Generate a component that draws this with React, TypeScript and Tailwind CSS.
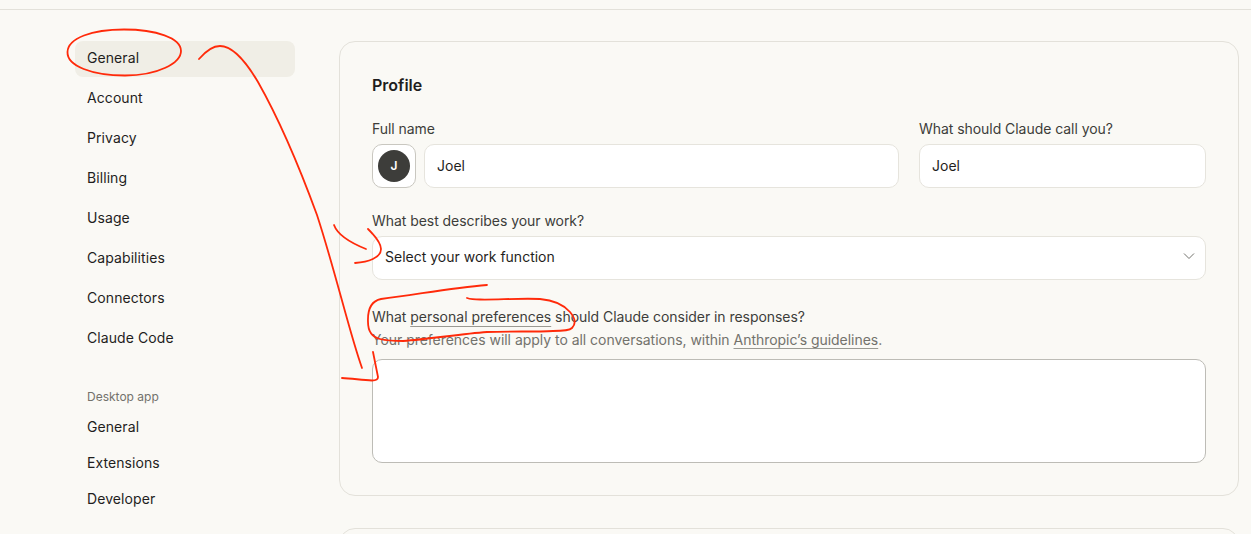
const FONT = "font-['Inter','Noto_Sans',sans-serif]";

const MAIN_NAV = ["General", "Account", "Privacy", "Billing", "Usage", "Capabilities", "Connectors", "Claude Code"];
const DESKTOP_NAV = ["General", "Extensions", "Developer"];

function NavItem({ label, active }: { label: string; active?: boolean }) {
  return (
    <div
      className={`flex h-9 items-center rounded-lg px-3 pb-0.5 text-[14px] leading-none tracking-[0.08px] text-[#1f1e1d] ${
        active ? "bg-[#f0eee6]" : ""
      }`}
    >
      {label}
    </div>
  );
}

function Sidebar() {
  return (
    <nav className="w-[220px] shrink-0">
      <div className="flex flex-col gap-1">
        {MAIN_NAV.map((item, i) => (
          <NavItem key={item} label={item} active={i === 0} />
        ))}
      </div>
      <div className="mt-[30px] mb-[3px] h-5 px-3 text-[12px] leading-5 text-[#73726c]">Desktop app</div>
      <div className="flex flex-col">
        {DESKTOP_NAV.map((item) => (
          <NavItem key={item} label={item} />
        ))}
      </div>
    </nav>
  );
}

function TextField({ value }: { value: string }) {
  return (
    <input
      readOnly
      defaultValue={value}
      className="h-11 w-full rounded-[10px] border border-[#e6e4dd] bg-white px-3 pb-0.5 text-[14px] text-[#1f1e1d] outline-none"
    />
  );
}

function ProfileCard() {
  return (
    <section className="h-[455px] w-[900px] shrink-0 rounded-2xl border border-[#e3e1da] px-8 pt-8">
      <h2 className="h-[22px] text-[16px] leading-[22px] font-semibold text-[#1f1e1d]">Profile</h2>
      <div className="mt-6 flex gap-5">
        <div className="flex-1">
          <label className="block h-6 text-[14px] leading-[18px] tracking-[-0.05px] text-[#3d3d3a]">Full name</label>
          <div className="flex gap-2">
            <div className="grid size-11 shrink-0 place-items-center rounded-[10px] border border-[#c9c7c0] bg-white">
              <span className="grid size-8 place-items-center rounded-full bg-[#3d3d3a] text-[12px] font-semibold text-white">
                J
              </span>
            </div>
            <TextField value="Joel" />
          </div>
        </div>
        <div className="w-[287px] shrink-0">
          <label className="block h-6 text-[14px] leading-[18px] tracking-[-0.05px] text-[#3d3d3a]">
            What should Claude call you?
          </label>
          <TextField value="Joel" />
        </div>
      </div>
      <label className="mt-[23px] block h-[25px] text-[14px] leading-[20px] tracking-[-0.05px] text-[#3d3d3a]">
        What best describes your work?
      </label>
      <div className="flex h-11 items-center justify-between rounded-[10px] border border-[#e6e4dd] bg-white pr-[9px] pb-1 pl-3 text-[14px] text-[#1f1e1d]">
        <span>Select your work function</span>
        <svg width="14" height="14" viewBox="0 0 14 14" fill="none" stroke="#73726c" strokeWidth="1">
          <path d="M2 4.5 L7 9.5 L12 4.5" />
        </svg>
      </div>
      <p className="mt-7 h-[22px] text-[14px] leading-[18px] tracking-[-0.05px] text-[#3d3d3a]">
        What{" "}
        <span className="tracking-normal underline decoration-[#9a9992] decoration-1 underline-offset-[4px]">
          personal preferences
        </span>{" "}
        should Claude consider in responses?
      </p>
      <p className="h-[29px] text-[14px] leading-[20px] tracking-[-0.03px] text-[#73726c]">
        Your preferences will apply to all conversations, within{" "}
        <span className="underline decoration-[#9a9992] decoration-1 underline-offset-[3px]">Anthropic’s guidelines</span>.
      </p>
      <textarea className="block h-[104px] w-full resize-none rounded-[10px] border border-[#bdbcb6] bg-white outline-none" />
    </section>
  );
}

function Annotations() {
  return (
    <svg
      className="pointer-events-none absolute top-0 left-0"
      width="1251"
      height="534"
      viewBox="0 0 1251 534"
      fill="none"
      stroke="#ff2a0a"
      strokeWidth="1.8"
      strokeLinecap="round"
      strokeLinejoin="round"
    >
      <path d="M124 29.5 C 92 29.5 68 38 67.5 52 C 67 66 92 75.5 125 75.5 C 158 75.5 181 63 181 51 C 181 38 156 29.5 124 29.5 Z" />
      <path d="M199 59 C 205 52 212 46 220 46 C 232 46 245 60 258 82 C 275 112 295 155 317 215 C 335 270 350 335 362 368" />
      <path d="M342 378 C 352 378.5 362 380 372 380.5 C 376 380.5 378 379.5 378 377 L 373 352" />
      <path d="M334 225 C 338 236 351 243 366 249" />
      <path d="M368 229 C 376 237 381 243 381 249 C 381 258 368 262 355 263" />
      <path d="M487 285 C 450 288 415 295 381 299 C 371 301 367.5 310 368 322 C 368 332 372 337 380 339 C 388 341 396 341 403 341 C 430 339 460 334 487 332 C 510 331 535 332 553 331 C 562 331 570 330 572 328 C 576 324 575 318 570 312 C 563 304 552 300 540 299 C 520 298 495 300 480 299.5 C 474 299.5 470 299 467 298" />
    </svg>
  );
}

export default function App() {
  return (
    <div className={`relative h-[534px] w-[1251px] overflow-hidden bg-[#faf9f5] ${FONT}`}>
      <div className="h-[10px] border-b border-[#e3e1da]" />
      <div className="flex gap-11 pt-[31px] pl-[75px]">
        <Sidebar />
        <div className="flex flex-col gap-8">
          <ProfileCard />
          <section className="h-[200px] w-[900px] shrink-0 rounded-2xl border border-[#e3e1da]" />
        </div>
      </div>
      <Annotations />
    </div>
  );
}
